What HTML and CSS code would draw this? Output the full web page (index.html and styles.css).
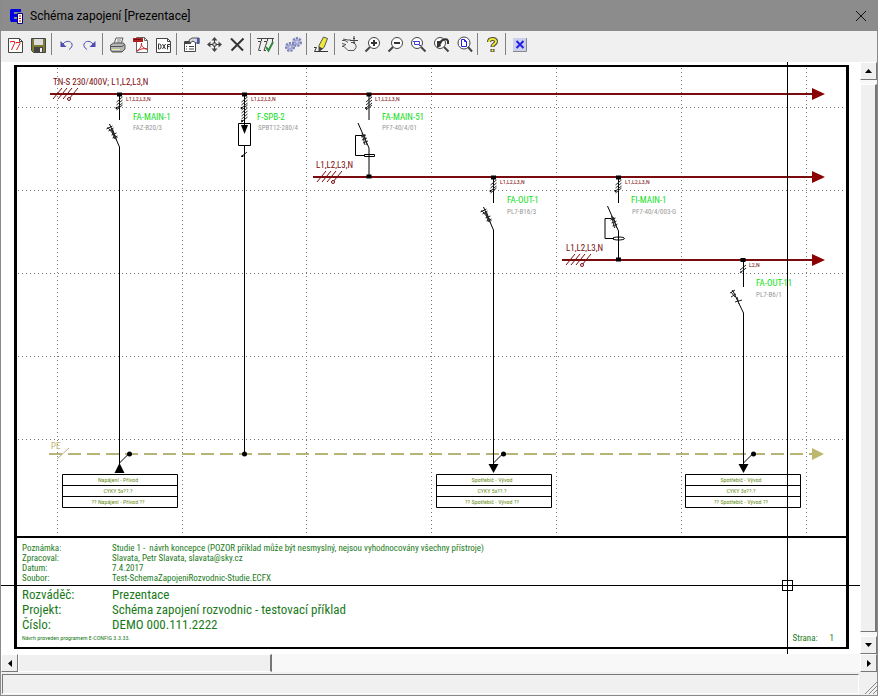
FILE: index.html
```html
<!DOCTYPE html>
<html lang="cs">
<head>
    <meta charset="UTF-8">
    <title>Schéma zapojení [Prezentace]</title>
    <link rel="stylesheet" href="styles.css">
</head>
<body>
    <header class="titlebar">
        <svg class="app-icon" width="16" height="16" viewBox="0 0 16 16">
            <path d="M2 1h10v3H5v2h5v3H5v2h3v3H2L1 12V2z" fill="#0000e0"/>
            <path d="M8.500 5.500h5v10h-5z" fill="#fff" stroke="#000080"/>
            <path d="M10 8h2M10 10.500h2M10 13h2" stroke="#e00000"/>
        </svg>
        <h1>Schéma zapojení [Prezentace]</h1>
        <button class="close" aria-label="Zavřít">
            <svg width="12" height="12" viewBox="0 0 12 12"><path d="M1 1l10 10M11 1L1 11" stroke="#111" fill="none"/></svg>
        </button>
    </header>

    <nav class="toolbar">
        <button aria-label="Rozváděč"><svg viewBox="0 0 17 17">
            <path d="M1.500 2.500h11l3 3v11h-14z" fill="#fff" stroke="#444"/><path d="M12.500 2.500v3h3" stroke="#444"/>
            <path d="M3.500 6.500v-1h4v2L4.500 14M9 7.500v-1h4v1L9.500 14" stroke="#e02020"/></svg></button>
        <button aria-label="Uložit"><svg viewBox="0 0 17 17">
            <path d="M1.500 2.500h14v14h-12l-2-2z" fill="#7c7c34" stroke="#444"/><path d="M4 3h9v6H4z" fill="#ddd"/>
            <path d="M4 11h9v5H4z" fill="#444"/><path d="M10 12h2v4h-2z" fill="#eee"/></svg></button>
        <span class="sep"></span>
        <button aria-label="Zpět"><svg viewBox="0 0 17 17">
            <path d="M2.500 5v6h6z" fill="#4a4ab0"/><path d="M5 8c3-4 8-3 9 0 .5 2-.5 4-3 5.500" stroke="#4a4ab0"/></svg></button>
        <button aria-label="Znovu"><svg viewBox="0 0 17 17">
            <path d="M14.500 5v6h-6z" fill="#4a4ab0"/><path d="M12 8C9 4 4 5 3 8c-.5 2 .5 4 3 5.500" stroke="#4a4ab0"/></svg></button>
        <span class="sep"></span>
        <button aria-label="Tisk"><svg viewBox="0 0 17 17">
            <path d="M5 8l2-6h7l-2 6z" fill="#fff" stroke="#555"/><path d="M8 4h4M7.500 6h4" stroke="#777"/>
            <path d="M1.500 9l3-2h10l1.500 2v4l-3 3h-10l-1.500-2z" fill="#b5b5b5" stroke="#555"/>
            <path d="M2 10.500h11l2.500-2" stroke="#555"/><path d="M3 13.500h8" stroke="#e8e8a0"/><path d="M3 15.500h10" stroke="#666"/></svg></button>
        <button aria-label="Export PDF"><svg viewBox="0 0 17 17">
            <path d="M4.500 1.500h8l3 3v12h-11z" fill="#fff" stroke="#666"/><path d="M12.500 1.500v3h3" stroke="#666"/>
            <path d="M1 2h10v4H1z" fill="#b02020"/><path d="M2 3.500h7" stroke="#701010"/>
            <path d="M5 15c2-1 5-5 4.500-8-1 3 3 6 5.500 6-3-1-7 0-10 2z" stroke="#d02020"/></svg></button>
        <button aria-label="Export DXF"><svg viewBox="0 0 17 17">
            <path d="M1.500 2.500h11l3 3v11h-14z" fill="#fff" stroke="#444"/><path d="M12.500 2.500v3h3" stroke="#444"/>
            <path d="M3.500 8v5h1l1.500-1V9L4.500 8zM7.500 8l3 5M10.500 8l-3 5M12.500 13.500v-5h2.500M12.500 10.500h2" stroke="#333"/></svg></button>
        <span class="sep"></span>
        <button aria-label="Vlastnosti"><svg viewBox="0 0 17 17">
            <path d="M1.500 5.500h11v10h-11z" fill="#fff" stroke="#444"/><path d="M2 7h6" stroke="#444" stroke-width="2"/>
            <path d="M3 10.500h1M6 10.500h5M3 13h1M6 13h5" stroke="#444"/>
            <path d="M6 4l3-2h5l2 0v5h-3l-3-2-3 2z" fill="#d8d8e8" stroke="#555"/><path d="M14 2h2.500v6H14z" fill="#4a5aa0"/></svg></button>
        <button aria-label="Posun"><svg viewBox="0 0 17 17">
            <path d="M8.500 3v12M3 8.500h12" stroke="#333"/><path d="M8.500 1l3 3.500h-6zM8.500 16l3-3.500h-6zM1 8.500l3.500-3v6zM16 8.500l-3.500-3v6z" fill="#444"/>
            <path d="M7 7h3v3H7z" fill="#f0f0f0" stroke="#444"/></svg></button>
        <button aria-label="Smazat"><svg viewBox="0 0 17 17">
            <path d="M2 2.500l12 12M14.500 2.500l-12 12" stroke="#333" stroke-width="2"/></svg></button>
        <span class="sep"></span>
        <button aria-label="Kontrola"><svg viewBox="0 0 17 17">
            <path d="M0 2.500h17" stroke="#444"/><path d="M1 5.500h3l-2.500 9M2 14.500h2M7 5.500h3l-3 9h2M4.500 3v2M10.500 3v2M15.500 3v3" stroke="#444"/>
            <path d="M9 11l2.500 3.500L16 6" stroke="#2c8c3c" stroke-width="2"/></svg></button>
        <span class="sep"></span>
        <button aria-label="Nastavení"><svg viewBox="0 0 17 17">
            <circle cx="5" cy="11" r="3.500" stroke="#7a80b8" stroke-width="3" stroke-dasharray="2 1"/><circle cx="5" cy="11" r="3" fill="#a4a8d4"/>
            <circle cx="12" cy="6" r="3.500" stroke="#7a80b8" stroke-width="3" stroke-dasharray="2 1"/><circle cx="12" cy="6" r="3" fill="#a4a8d4"/>
            <path d="M4 11h2M11 6h2" stroke="#eee"/></svg></button>
        <span class="sep"></span>
        <button aria-label="Úpravy"><svg viewBox="0 0 17 17">
            <path d="M10.500 1l4 1.500-3.500 9-5 4V9.500z" fill="#f0e840" stroke="#555"/><path d="M6 10.500v5l4-3z" fill="#444"/>
            <path d="M1 11.500h2.500l-2 4H15" stroke="#333"/></svg></button>
        <span class="sep"></span>
        <button aria-label="Posun výřezu"><svg viewBox="0 0 17 17">
            <path d="M1 4.500h3l3 2M1 7.500l4 1M2 3l5 1h3M5 8.500l-4 2h2l4 4h6l2-3v-2l-2-3h-3" stroke="#555"/>
            <path d="M13 0v8M9 4.500h8M12 2.500h2M12 6.500h2" stroke="#444"/></svg></button>
        <button aria-label="Zvětšit"><svg viewBox="0 0 17 17">
            <circle cx="10" cy="7" r="5.500" fill="#fff" stroke="#444"/><path d="M7 7h6M10 4v6" stroke="#333" stroke-width="2"/><path d="M6 11l-4.500 4.500" stroke="#444" stroke-width="2"/></svg></button>
        <button aria-label="Zmenšit"><svg viewBox="0 0 17 17">
            <circle cx="10" cy="7" r="5.500" fill="#fff" stroke="#444"/><path d="M7 7h6" stroke="#333" stroke-width="2"/><path d="M6 11l-4.500 4.500" stroke="#444" stroke-width="2"/></svg></button>
        <button aria-label="Výřez"><svg viewBox="0 0 17 17">
            <circle cx="7" cy="7" r="5.500" fill="#fff" stroke="#444"/><path d="M4.500 5.500h5v3h-5z" stroke="#4040d0"/><path d="M3 5.500h2M9 9.500h2" stroke="#4040d0"/><path d="M11 11l4.500 4.500" stroke="#444" stroke-width="2"/></svg></button>
        <button aria-label="Předchozí výřez"><svg viewBox="0 0 17 17">
            <circle cx="7" cy="7" r="5.500" fill="#fff" stroke="#444"/><path d="M4 12V5h5l-2 2 1 3z" fill="#333"/><path d="M7 8c1-5 7-6 8-3v3" stroke="#333" stroke-width="2"/><path d="M11 11l4.500 4.500" stroke="#444" stroke-width="2"/></svg></button>
        <button aria-label="Celá stránka"><svg viewBox="0 0 17 17">
            <circle cx="8" cy="7" r="6" fill="#fff" stroke="#444"/><path d="M5.500 3.500h3l2 2v5h-5zM8.500 3.500v2h2" stroke="#2020e0"/><path d="M12 11l4 4.500" stroke="#444" stroke-width="2"/></svg></button>
        <span class="sep"></span>
        <button aria-label="Nápověda"><svg viewBox="0 0 17 17">
            <path d="M5 6c0-4 7-4 7-.500 0 2.500-3.500 2.500-3.500 5.500M8.500 13v3" stroke="#444" stroke-width="4"/>
            <path d="M5 6c0-4 7-4 7-.500 0 2.500-3.500 2.500-3.500 5M8.500 13.500v2" stroke="#f0e830" stroke-width="2"/></svg></button>
        <span class="sep"></span>
        <button aria-label="Konec"><svg viewBox="0 0 17 17">
            <path d="M1 2h14v14H1z" fill="#ccd0ee"/><path d="M1 15.500h13.500V2" stroke="#888"/><path d="M4.500 5l7 7M11.500 5l-7 7" stroke="#2222e0" stroke-width="2"/></svg></button>
    </nav>

    <main class="view">
        <div class="canvas">
            <article class="sheet">
                <svg class="schema" viewBox="17 67 829 469">
                    <defs>
                        <!-- conductor marks under a tap -->
                        <g id="tap">
                            <path d="M-2.500-1.500h5v4h-5z" fill="#000"/>
                            <path d="M0 0v26" class="wire"/>
                            <path d="M-3 8l6-5M-3 11l6-5M-3 14l6-5M-3 16l6-5" class="thin"/>
                            <circle cx="-3" cy="14" r="1"/>
                        </g>
                        <g id="bus-marks">
                            <path d="M0 5L9-6M5 5l9-11M10 5l9-11M16 5l9-11" fill="none" stroke="#7a0c10"/>
                            <circle cx="16" cy="5" r="1.500" fill="#fff" stroke="#7a0c10"/>
                        </g>
                        <!-- circuit breaker contact -->
                        <g id="breaker">
                            <path d="M0 0L-10-23" class="wire"/>
                            <path d="M-2-9l-6-6M-3-7l-4-11M-5-8l-3-9M-8-12l5-2M-7-9l5-2" class="thin"/>
                            <path d="M-13-18l6-3M-11-16l5-3M-12-20l4 5" class="thin"/>
                        </g>
                        <g id="rcd">
                            <path d="M0 0l-11-25" class="wire"/>
                            <path d="M-7-15l3 12M-5-14l3 11M-7-8l5-2M-6-5l5-2M-8-11l5-2" class="thin"/>
                            <path d="M-7-12.500h-6.500v20h9M0 0v29" class="wire"/>
                            <path d="M-2.500 26.500h5v4h-5z" fill="#000"/>
                        </g>
                        <g id="pe-link"><path d="M0 9l9-9" class="wire"/><circle cx="10" cy="0" r="2.500"/></g>
                        <g id="box">
                            <path d="M.5 .5h115v33H.5zM.5 11.500h115M.5 22.500h115" class="wire"/>
                        </g>
                    </defs>

                    <g class="raster">
                        <path d="M57.500 68v466M182.500 68v466M306.500 68v466M431.500 68v466M556.500 68v466M681.500 68v466M806.500 68v466"/>
                        <path d="M18 107.500h828M18 190.500h828M18 273.500h828M18 356.500h828M18 439.500h828"/>
                    </g>

                    <g class="bus">
                        <path d="M50 94h764M313 177h501M562 260h252"/>
                        <path d="M812 88l13 6-13 6zM812 171l13 6-13 6zM812 254l13 6-13 6z" class="head"/>
                    </g>
                    <use href="#bus-marks" x="53" y="94"/>
                    <use href="#bus-marks" x="317" y="177"/>
                    <use href="#bus-marks" x="566" y="260"/>
                    <text x="53" y="85" class="net">TN-S 230/400V; L1,L2,L3,N</text>
                    <text x="316" y="168" class="net">L1,L2,L3,N</text>
                    <text x="566" y="251" class="net">L1,L2,L3,N</text>

                    <g class="pe">
                        <path d="M49 454h765" class="pe-line"/>
                        <path d="M57 459l12-11" class="pe-mark"/>
                        <path d="M812 448l12 6-12 6z" class="pe-head"/>
                        <text x="51" y="449" class="pe-text">PE</text>
                    </g>

                    <!-- FA-MAIN-1 -->
                    <use href="#tap" x="119.500" y="94"/>
                    <use href="#breaker" x="119.500" y="147"/>
                    <path d="M119.500 147v318" class="wire"/>
                    <path d="M119.500 463l5 10h-10z"/>
                    <use href="#pe-link" x="119.500" y="454"/>
                    <text x="126" y="101" class="tap-text">L1,L2,L3,N</text>
                    <text x="133" y="120" class="name">FA-MAIN-1</text>
                    <text x="133" y="130" class="type">FAZ-B20/3</text>

                    <!-- F-SPB-2 -->
                    <use href="#tap" x="244.500" y="94"/>
                    <path d="M241.500 113l6-5M241.500 116l6-5M241.500 119l6-5M241.500 122l6-5M241 157l6-5" class="thin"/>
                    <path d="M238.500 123.500h12v22h-12zM244.500 118v8M244.500 145v309" class="wire"/>
                    <path d="M241 125h7l-3.500 9z"/>
                    <circle cx="244.500" cy="454" r="2.500"/><circle cx="242" cy="121" r="1"/><circle cx="242.500" cy="156" r="1"/>
                    <text x="251" y="101" class="tap-text">L1,L2,L3,N</text>
                    <text x="257" y="120" class="name">F-SPB-2</text>
                    <text x="258" y="130" class="type">SPBT12-280/4</text>

                    <!-- FA-MAIN-51 -->
                    <use href="#tap" x="369" y="94"/>
                    <use href="#rcd" x="369" y="148"/>
                    <path d="M364.500 154.500h10v2h-10z" class="wire"/>
                    <text x="375" y="101" class="tap-text">L1,L2,L3,N</text>
                    <text x="382" y="120" class="name">FA-MAIN-51</text>
                    <text x="382" y="130" class="type">PF7-40/4/01</text>

                    <!-- FA-OUT-1 -->
                    <use href="#tap" x="493.500" y="177"/>
                    <use href="#breaker" x="493.500" y="230"/>
                    <path d="M493.500 230v235" class="wire"/>
                    <path d="M488.500 464h10l-5 9z"/>
                    <use href="#pe-link" x="493.500" y="454"/>
                    <text x="500" y="184" class="tap-text">L1,L2,L3,N</text>
                    <text x="507" y="203" class="name">FA-OUT-1</text>
                    <text x="507" y="214" class="type">PL7-B16/3</text>

                    <!-- FI-MAIN-1 -->
                    <use href="#tap" x="618.500" y="177"/>
                    <use href="#rcd" x="618.500" y="231"/>
                    <ellipse cx="618.500" cy="238.500" rx="6" ry="1.500" class="wire"/>
                    <text x="625" y="184" class="tap-text">L1,L2,L3,N</text>
                    <text x="631" y="203" class="name">FI-MAIN-1</text>
                    <text x="632" y="214" class="type">PF7-40/4/003-G</text>

                    <!-- FA-OUT-11 -->
                    <path d="M740.500 258h5v4h-5zM740 272l1-1 1 1-1 1z"/>
                    <path d="M743.500 260v27M743.500 313v152M743.500 313l-11-23" class="wire"/>
                    <path d="M740 270l6-5M740 273l6-5M730 293l5-3M731 297l5-3M731 292l4 5M735 302l7-2M737 297l2 7" class="thin"/>
                    <path d="M738.500 464h10l-5 9z"/>
                    <use href="#pe-link" x="743.500" y="454"/>
                    <text x="749" y="267" class="tap-text">L2,N</text>
                    <text x="756" y="286" class="name">FA-OUT-11</text>
                    <text x="756" y="297" class="type">PL7-B6/1</text>

                    <use href="#box" x="62" y="474"/>
                    <text x="118" y="482" class="cell">Napájení - Přívod</text>
                    <text x="118" y="493" class="cell">CYKY 5x??.?</text>
                    <text x="118" y="504" class="cell">?? Napájení - Přívod ??</text>

                    <use href="#box" x="436" y="474"/>
                    <text x="492" y="482" class="cell">Spotřebič - Vývod</text>
                    <text x="492" y="493" class="cell">CYKY 5x??.?</text>
                    <text x="492" y="504" class="cell">?? Spotřebič - Vývod ??</text>

                    <use href="#box" x="685" y="474"/>
                    <text x="741" y="482" class="cell">Spotřebič - Vývod</text>
                    <text x="741" y="493" class="cell">CYKY 3x??.?</text>
                    <text x="741" y="504" class="cell">?? Spotřebič - Vývod ??</text>
                </svg>

                <footer class="stamp">
                    <dl class="notes">
                        <dt>Poznámka:</dt>
                        <dd>Studie 1 -  návrh koncepce (POZOR příklad může být nesmyslný, nejsou vyhodnocovány všechny přístroje)</dd>
                        <dt>Zpracoval:</dt>
                        <dd>Slavata, Petr Slavata, slavata@sky.cz</dd>
                        <dt>Datum:</dt>
                        <dd>7.4.2017</dd>
                        <dt>Soubor:</dt>
                        <dd>Test-SchemaZapojeniRozvodnic-Studie.ECFX</dd>
                    </dl>
                    <dl class="project">
                        <dt>Rozváděč:</dt>
                        <dd>Prezentace</dd>
                        <dt>Projekt:</dt>
                        <dd>Schéma zapojení rozvodnic - testovací příklad</dd>
                        <dt>Číslo:</dt>
                        <dd>DEMO 000.111.2222</dd>
                    </dl>
                    <div class="sheet-foot">
                        <small>Návrh proveden programem E-CONFIG 3.3.33.</small>
                        <p class="page"><span>Strana:</span><span>1</span></p>
                    </div>
                </footer>
            </article>
            <div class="cross-v"></div>
            <div class="cross-h"></div>
            <div class="cross-box"></div>
        </div>

        <div class="vscroll">
            <button aria-label="Nahoru"><svg viewBox="0 0 7 4"><path d="M0 4h7L3.500 0z"/></svg></button>
            <div class="thumb"></div>
            <button aria-label="Dolů"><svg viewBox="0 0 7 4"><path d="M0 0h7L3.500 4z"/></svg></button>
        </div>

        <div class="hscroll">
            <button aria-label="Vlevo"><svg class="side" viewBox="0 0 4 7"><path d="M4 0v7L0 3.500z"/></svg></button>
            <div class="thumb"></div>
            <div class="track"></div>
            <button aria-label="Vpravo"><svg class="side" viewBox="0 0 4 7"><path d="M0 0v7l4-3.500z"/></svg></button>
        </div>
    </main>

    <footer class="statusbar">
        <div class="status-panel"></div>
        <svg class="grip" width="13" height="13" viewBox="0 0 13 13"><path d="M1 13L13 1M5 13l8-8M9 13l4-4" stroke="#888" fill="none"/></svg>
    </footer>
</body>
</html>
```
FILE: styles.css
```css
* {
    box-sizing: border-box;
}

body {
    margin: 0;
    height: 100vh;
    display: flex;
    flex-direction: column;
    overflow: hidden;
    background-color: #f0f0f0;
    border: 1px solid #8a8a8a;
    border-top: 0;
    font-family: Roboto, "Open Sans", sans-serif;
}

button {
    border: 0;
    padding: 0;
    background: none;
    display: flex;
    align-items: center;
    justify-content: center;
}

/* title bar */
.titlebar {
    flex: none;
    height: 31px;
    display: flex;
    align-items: center;
    padding: 0 9px 0 8px;
    background-color: #8c8c8c;
}

.titlebar h1 {
    flex: 1;
    margin: 0 0 0 5px;
    font-size: 12px;
    font-weight: normal;
    color: #000;
}

.close {
    width: 14px;
    height: 14px;
}

/* toolbar */
.toolbar {
    flex: none;
    height: 31px;
    display: flex;
    padding: 2px 3px;
}

.toolbar button {
    width: 23px;
    height: 23px;
}

.toolbar svg {
    width: 17px;
    height: 17px;
    fill: none;
}

.sep {
    width: 1px;
    height: 22px;
    margin: 0 3px 0 1px;
    background-color: #808080;
}

/* drawing */
.view {
    flex: 1;
    min-height: 0;
    display: grid;
    grid-template-columns: minmax(0, 1fr) 17px;
    grid-template-rows: minmax(0, 1fr) 18px;
}

.canvas {
    position: relative;
    display: flex;
    padding: 3px 11px 5px 13px;
    overflow: hidden;
    background-color: #fff;
}

.sheet {
    flex: 1;
    display: flex;
    flex-direction: column;
    border: solid #000;
    border-width: 2px 3px;
    font-family: "Roboto Condensed", "Arial Narrow", "Liberation Sans", sans-serif;
}

.schema {
    display: block;
    width: 100%;
    height: auto;
}

.wire {
    fill: none;
    stroke: #000;
}

.thin {
    fill: none;
    stroke: #222;
}

.raster {
    fill: none;
    stroke: #777;
    stroke-dasharray: 1 3;
}

.bus {
    fill: none;
    stroke: #7a0c10;
    stroke-width: 2px;
}

.bus .head {
    fill: #8b0000;
    stroke: none;
}

.pe-line {
    stroke: #b8b478;
    stroke-width: 2px;
    stroke-dasharray: 13 6;
}

.pe-mark {
    stroke: #b8b478;
}

.pe-head,
.pe-text {
    fill: #bdb76b;
}

.net,
.name,
.pe-text {
    font-size: 9px;
}

.type {
    font-size: 7px;
}

.cell,
.tap-text {
    font-size: 6px;
}

.net,
.tap-text {
    fill: #7a0c10;
}

.name {
    fill: #10e020;
}

.type {
    fill: #999;
}

.cell {
    text-anchor: middle;
    fill: #6b8e23;
}

/* title block */
.stamp {
    flex: 1;
    border-top: 2px solid #000;
    padding: 5px 5px 0;
    color: #1a7a1a;
}

.notes,
.project {
    display: grid;
    grid-template-columns: 90px 1fr;
    margin: 0;
}

.stamp dd {
    margin: 0;
    white-space: pre;
}

.notes {
    font-size: 9px;
    line-height: 10px;
}

.project {
    margin-top: 4px;
    font-size: 13px;
    line-height: 15px;
}

.sheet-foot {
    display: flex;
    justify-content: space-between;
    align-items: center;
    line-height: 12px;
}

.sheet-foot small {
    font-size: 6px;
}

.page {
    display: flex;
    gap: 12px;
    margin: 0;
    padding-right: 7px;
    font-size: 9px;
}

/* cursor */
.cross-v {
    position: absolute;
    left: 786px;
    top: 0;
    bottom: 0;
    border-left: 1px solid #000;
}

.cross-h {
    position: absolute;
    top: 523px;
    left: 0;
    right: 0;
    border-top: 1px solid #000;
}

.cross-box {
    position: absolute;
    left: 781px;
    top: 518px;
    width: 11px;
    height: 11px;
    border: 1px solid #000;
}

/* scrollbars */
.vscroll,
.hscroll {
    display: flex;
    background-color: #f8f8f8;
}

.vscroll {
    flex-direction: column;
}

.hscroll {
    grid-column: 1 / -1;
}

.vscroll button,
.hscroll button {
    flex: none;
    width: 17px;
    height: 18px;
    background-color: #f0f0f0;
    border: 1px solid #fff;
    border-right-color: #777;
    border-bottom-color: #777;
}

.vscroll svg {
    width: 7px;
    height: 4px;
}

.hscroll svg {
    width: 4px;
    height: 7px;
}

.thumb {
    background-color: #f0f0f0;
    border: 1px solid #fff;
    border-right: 2px solid #777;
}

.vscroll .thumb {
    flex: 1;
    margin: 4px 0;
    border-bottom: 1px solid #777;
}

.hscroll .thumb {
    width: 254px;
}

.track {
    flex: 1;
}

/* status bar */
.statusbar {
    flex: none;
    height: 23px;
    display: flex;
    align-items: flex-end;
    padding: 2px 0 1px 1px;
}

.status-panel {
    flex: 1;
    height: 20px;
    margin-right: 5px;
    border: 1px solid #777;
    border-right-color: #fff;
    border-bottom-color: #fff;
}
```
